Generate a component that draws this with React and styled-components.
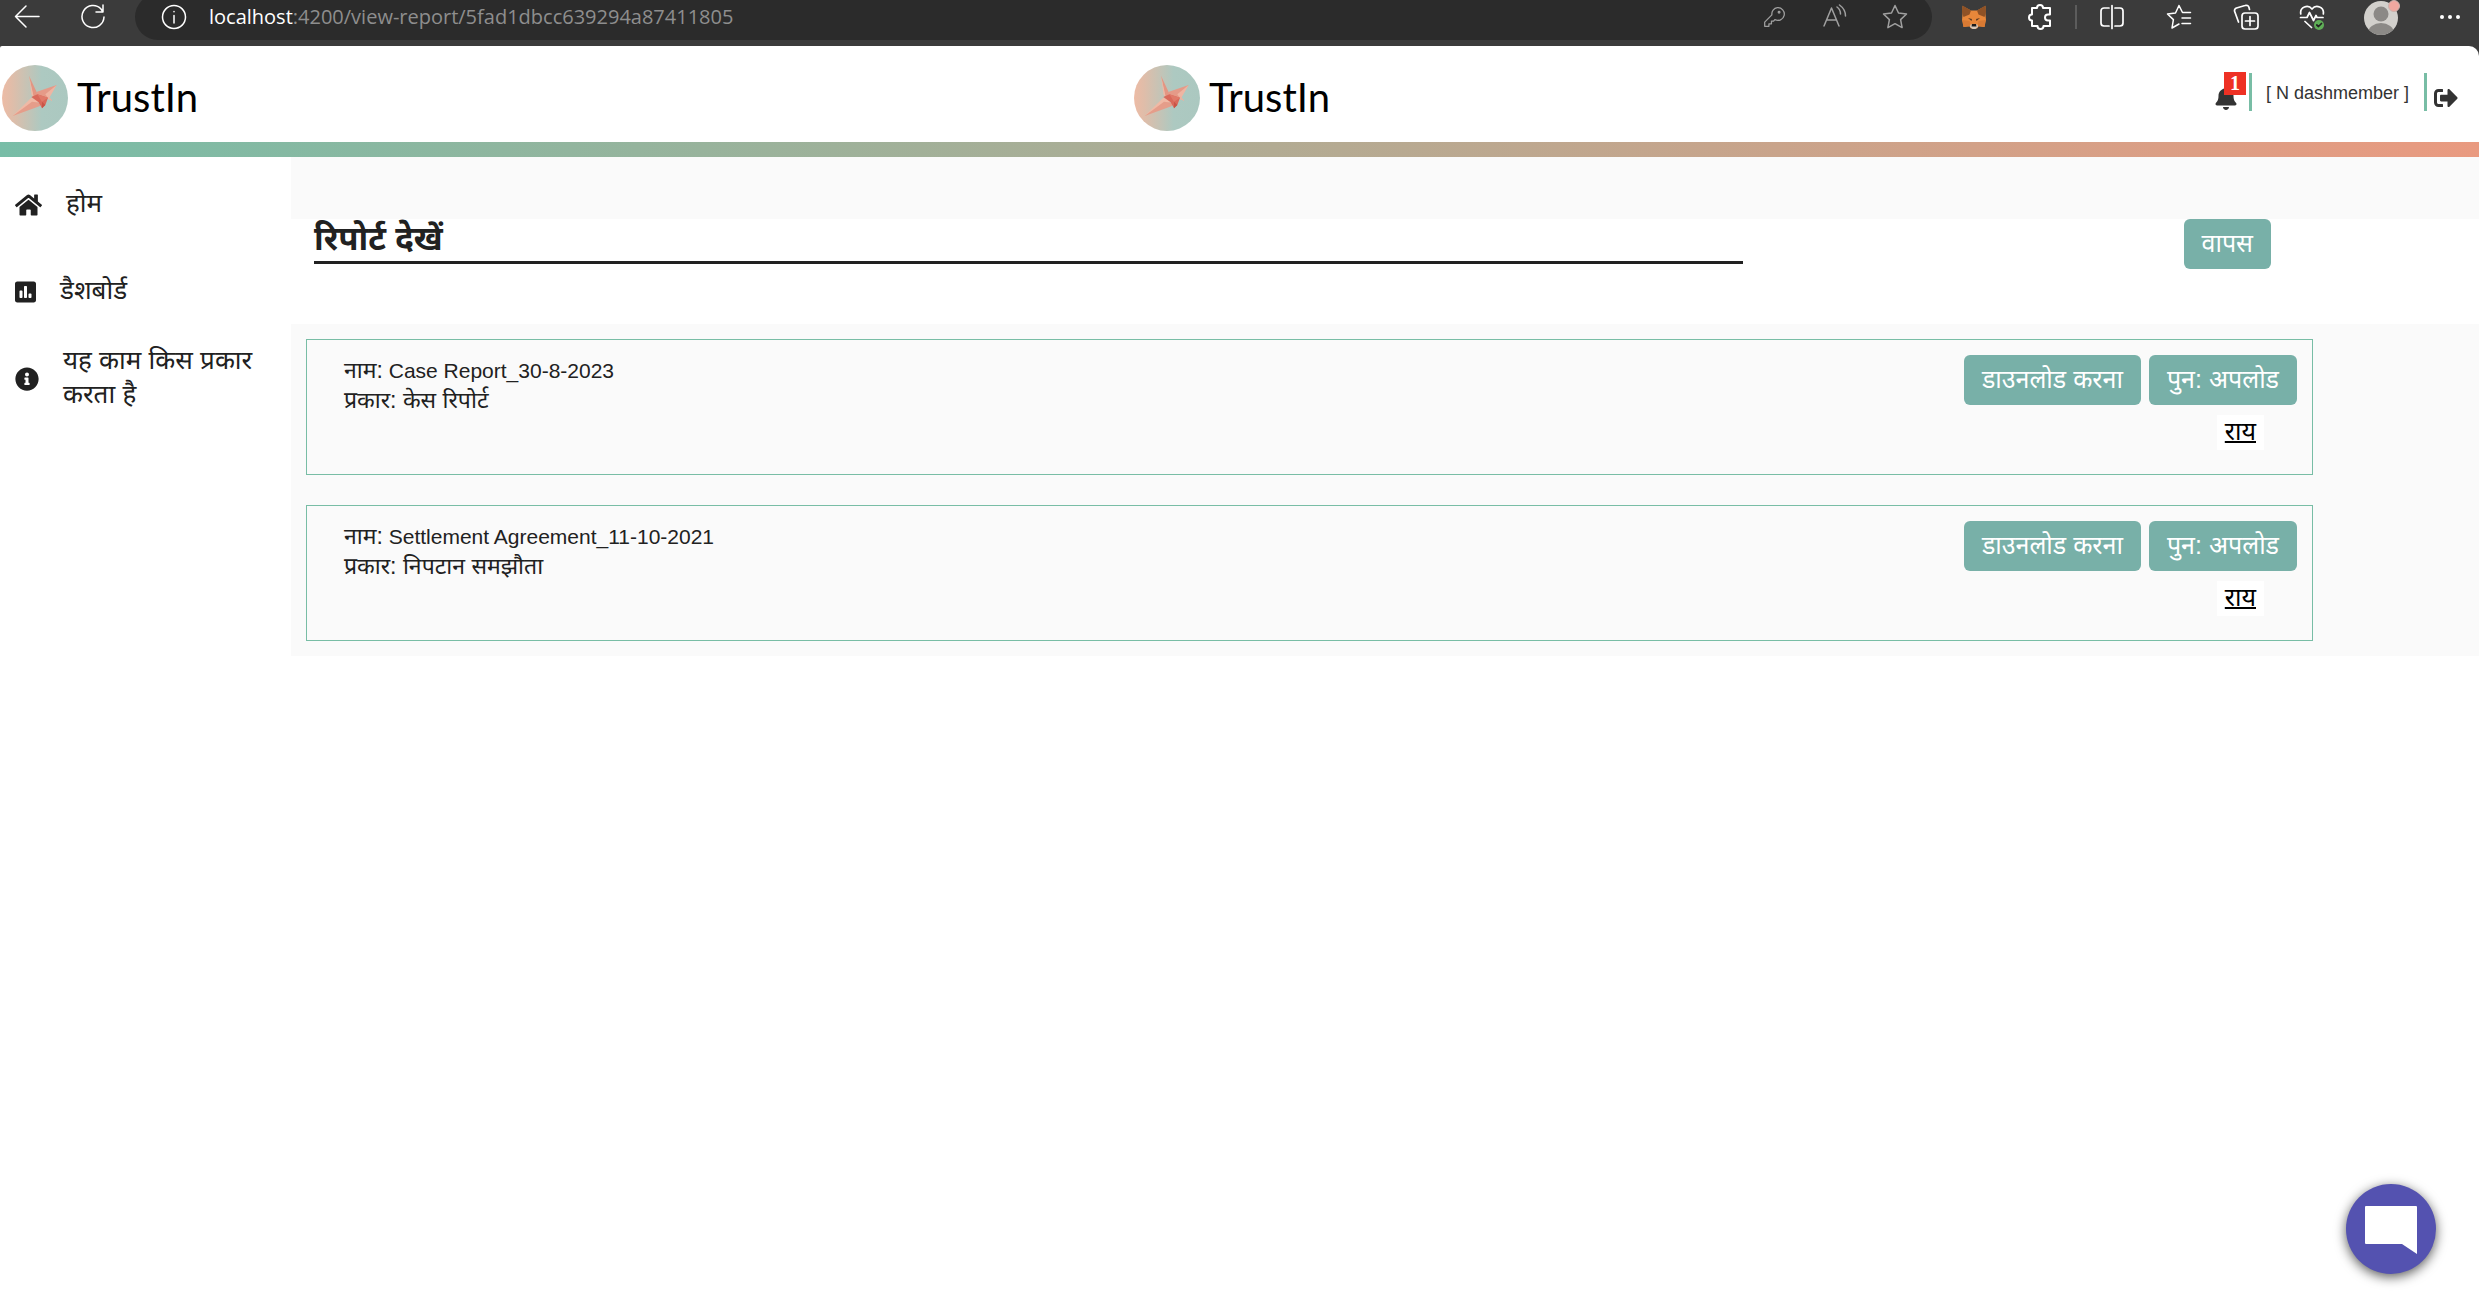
import React from "react";
import styled, { createGlobalStyle } from "styled-components";
import { FaHome, FaPoll, FaInfoCircle, FaBell, FaSignOutAlt } from "react-icons/fa";

const GlobalStyle = createGlobalStyle`
  * { box-sizing: border-box; }
  body {
    margin: 0;
    background: #fff;
    color: #212121;
    font-family: "Liberation Sans", "Noto Sans", "Noto Sans Devanagari", sans-serif;
  }
`;

/* ---------- browser bar ---------- */

const BrowserBar = styled.div`
  display: flex;
  align-items: center;
  height: 46px;
  padding: 0 16px 12px 14px;
  background: #3b3b3b;
  overflow: hidden;
`;

const BarButton = styled.button`
  display: grid;
  place-items: center;
  flex: none;
  width: ${(p) => p.$size || 26}px;
  height: ${(p) => p.$size || 26}px;
  margin: 0 ${(p) => p.$after || 0}px 0 0;
  padding: 0;
  border: 0;
  background: none;
  color: ${(p) => (p.$dim ? "#a0a0a0" : "#fff")};
`;

const AddressBar = styled.div`
  display: flex;
  align-items: center;
  flex: 1;
  height: 46px;
  margin-right: 29px;
  padding: 0 24px 0 26px;
  border-radius: 23px;
  background: #2b2b2b;
`;

const Url = styled.div`
  flex: 1;
  color: #8e8e8e;
  font: 20px/28px "Open Sans", "Noto Sans", sans-serif;
  white-space: nowrap;
`;

const Host = styled.span`
  color: #fff;
`;

const BarDivider = styled.span`
  flex: none;
  width: 2px;
  height: 24px;
  margin-right: 22px;
  background: #5c5c5c;
`;

const Glyph = ({ children, size = 26, width = 1.5 }) => (
  <svg
    width={size}
    height={size}
    viewBox="0 0 26 26"
    fill="none"
    stroke="currentColor"
    strokeWidth={width}
    strokeLinecap="round"
    strokeLinejoin="round"
    aria-hidden="true"
  >
    {children}
  </svg>
);

const Fox = () => (
  <svg width="26" height="26" viewBox="0 0 26 26" aria-hidden="true">
    <path d="M1.500 2 10 6.500h6L24.500 2v8l.5 6-1.500 7-6-.5-1.500 2h-6l-1.500-2-6 .5L1 16l.5-6z" fill="#e8873a" />
    <path d="M1.500 1.500 10 6.500l-1.500 4L2.500 13 1 8z" fill="#8f5226" />
    <path d="M24.500 1.500 16 6.500l1.500 4 6 2.500L25 8z" fill="#8f5226" />
    <path d="m7 14 4 1-.5 2zM19 14l-4 1 .5 2z" fill="#5a3a24" />
    <path d="m1.500 16 7 1 1 4.500-7 1.500zM24.500 16l-7 1-1 4.500 7 1.500z" fill="#d97a33" />
    <path d="M9.500 20.500h7l.5 2.500-2.500 2h-3L9 23z" fill="#d8c8ba" />
    <path d="M11 20h4l.5 2.500h-5z" fill="#1c1c1c" />
  </svg>
);

const Avatar = () => (
  <svg width="36" height="36" viewBox="0 0 36 36" aria-hidden="true">
    <defs>
      <clipPath id="face">
        <circle cx="17" cy="19" r="17" />
      </clipPath>
    </defs>
    <circle cx="17" cy="19" r="17" fill="#d2d0cc" />
    <g clipPath="url(#face)" fill="#8b8986">
      <circle cx="17" cy="15" r="7.500" />
      <ellipse cx="17" cy="34" rx="13" ry="10" />
    </g>
    <circle cx="30" cy="7" r="5.500" fill="#f0a8a0" stroke="#c9b3ae" />
  </svg>
);

/* ---------- header ---------- */

const Frame = styled.div`
  background: #3b3b3b;
`;

const Header = styled.header`
  display: grid;
  grid-template-columns: 1fr auto 1fr;
  align-items: center;
  height: 96px;
  padding-top: 8px;
  border-radius: 2px 10px 0 0;
  background: #fff;
`;

const Brand = styled.a`
  display: flex;
  align-items: center;
  gap: 9px;
  width: 215px;
  padding-left: 2px;
  color: #000;
  font: 400 40px/66px Lato, sans-serif;
  text-decoration: none;
`;

const BrandName = styled.span`
  padding-bottom: 2px;
  line-height: 64px;
`;

const Tools = styled.div`
  display: flex;
  align-items: flex-end;
  align-self: start;
  justify-self: end;
  padding: 19px 21px 0 0;
`;

const Member = styled.div`
  margin: 0 7px 0 11px;
  padding: 2px 15px 0 14px;
  border: solid #78bda5;
  border-width: 0 3px;
  font-size: 18px;
  line-height: 36px;
  color: #333;
`;

const IconButton = styled.button`
  position: relative;
  display: grid;
  padding: 0 0 1px;
  border: 0;
  background: none;
  color: #333;
  font-size: 24px;
`;

const Count = styled.span`
  position: absolute;
  left: 10px;
  bottom: 16px;
  width: 22px;
  background: #ee3124;
  color: #fff;
  font: bold 20px/23px "Liberation Serif", serif;
  text-align: center;
`;

const Ribbon = styled.div`
  height: 15px;
  background: linear-gradient(90deg, #78bda7, #e99a80);
`;

const Crane = () => (
  <svg width="66" height="66" viewBox="102 72 198 198" aria-hidden="true">
    <defs>
      <linearGradient id="disc">
        <stop offset="0" stopColor="#edbba5" />
        <stop offset=".15" stopColor="#e0bda9" />
        <stop offset=".6" stopColor="#adc9c1" />
        <stop offset="1" stopColor="#abc8c0" />
      </linearGradient>
    </defs>
    <circle cx="201" cy="171" r="99" fill="url(#disc)" />
    <path d="M183 104 209 160 196 168z" fill="#e39683" />
    <path d="M183 104 191 162 197 167z" fill="#f0b8a4" />
    <path d="M266 132 207 152 204 162 238 172z" fill="#e59a88" />
    <path d="M266 132 232 160 242 174z" fill="#efb5a2" />
    <path d="M240 164 254 180 238 174z" fill="#eeb19e" />
    <path d="M134 225 190 170 216 180z" fill="#f0b9a5" />
    <path d="M134 225 192 182 224 186 214 196z" fill="#e59d8a" />
    <path d="M190 168 208 160 240 170 232 192 222 202 212 184z" fill="#d9695a" />
    <path d="M208 160 240 170 222 182z" fill="#e07a69" />
    <path d="M222 182 232 192 222 202z" fill="#c85447" />
  </svg>
);

/* ---------- body ---------- */

const Body = styled.div`
  display: flex;
  align-items: flex-start;
`;

const SideNav = styled.nav`
  flex: none;
  width: 291px;
  padding: 4px 32px 0 15px;
`;

const NavLink = styled.a`
  display: flex;
  align-items: center;
  gap: 24px;
  min-height: 87px;
  color: #212121;
  font-size: 26px;
  line-height: 34px;
  text-decoration: none;

  svg {
    flex: none;
    width: ${(p) => p.$icon}px;
    height: 24px;
  }
`;

const NavLabel = styled.span`
  padding-bottom: 3px;
`;

const Main = styled.main`
  flex: 1;
  min-width: 0;
  padding-top: 62px;
  background: #fafafa;
`;

const TitleBand = styled.div`
  display: flex;
  align-items: flex-start;
  justify-content: space-between;
  height: 105px;
  padding: 0 208px 0 23px;
  background: #fff;
`;

const Title = styled.h1`
  flex: none;
  width: 73%;
  margin: 0;
  padding-bottom: 3px;
  border-bottom: 3px solid #212121;
  font-size: 33px;
  font-weight: 700;
  line-height: 39px;
`;

const ActionButton = styled.button`
  height: 50px;
  padding: 0 18px 3px;
  border: 0;
  border-radius: 6px;
  background: #78b0a8;
  color: #fff;
  font-family: inherit;
  font-size: 25px;
  line-height: 34px;
  white-space: nowrap;
`;

const Reports = styled.section`
  display: grid;
  gap: 30px;
  padding: 15px 166px 15px 15px;
`;

const Card = styled.article`
  display: flex;
  justify-content: space-between;
  min-height: 136px;
  padding: 15px 15px 15px 37px;
  border: 1px solid #78bda5;
`;

const Details = styled.div`
  font-size: 21px;
  line-height: 30px;
`;

const DetailLine = styled.div`
  height: 30px;
`;

const Hindi = styled.span`
  font-size: 23px;
`;

const Actions = styled.div`
  display: flex;
  flex-wrap: wrap;
  align-content: flex-start;
  justify-content: flex-end;
  gap: 10px 8px;
  width: 360px;
`;

const Feedback = styled.button`
  height: 35px;
  margin-right: 33px;
  padding: 0 8px 3px;
  border: 0;
  background: #fff;
  color: #000;
  font-family: inherit;
  font-size: 25px;
  line-height: 32px;
  text-decoration: underline 2px;
`;

const ChatButton = styled.button`
  position: fixed;
  right: 43px;
  bottom: 22px;
  display: grid;
  place-items: center;
  width: 90px;
  height: 90px;
  padding: 2px 0 0;
  border: 0;
  border-radius: 50%;
  background: #5452b0;
  box-shadow: 0 3px 12px rgba(0, 0, 0, 0.65);
`;

const reports = [
  { name: "Case Report_30-8-2023", type: "केस रिपोर्ट" },
  { name: "Settlement Agreement_11-10-2021", type: "निपटान समझौता" },
];

export default function App() {
  return (
    <>
      <GlobalStyle />
      <BrowserBar>
        <BarButton aria-label="Back" $after={40}>
          <Glyph><path d="M25 12.500H1.500M12 2 1.500 12.500 12 23" /></Glyph>
        </BarButton>
        <BarButton aria-label="Reload" $after={29}>
          <Glyph><path d="M24 13a11 11 0 1 1-3-8l2 3M23 1v7h-7" /></Glyph>
        </BarButton>
        <AddressBar>
          <BarButton aria-label="Site information" $after={22}>
            <Glyph><circle cx="13" cy="13" r="11.500" /><path d="M13 11.500V19M13 7.500v.3" /></Glyph>
          </BarButton>
          <Url><Host>localhost</Host>:4200/view-report/5fad1dbcc639294a87411805</Url>
          <BarButton aria-label="Passwords" $dim $after={35}>
            <Glyph size={22}>
              <path d="M17 2a7.500 7.500 0 1 1-3 14l-1.500 2H10v3H7v3H2v-5l8.500-8.500A7.500 7.500 0 0 1 17 2z" />
              <circle cx="19" cy="7.500" r="1" />
            </Glyph>
          </BarButton>
          <BarButton aria-label="Read aloud" $dim $after={34}>
            <Glyph><path d="M2 22 9.500 4 17 22M5 16h9.500M15 3c2 1.500 3.500 4 3.500 7M17.500 1c3.500 2.500 6 6.500 6 11" /></Glyph>
          </BarButton>
          <BarButton aria-label="Add to favourites" $dim>
            <Glyph><path d="m13 1.500 3.500 7.500 8 1-5.900 5.600 1.500 8L13 19.700l-7.100 3.900 1.500-8L1.500 10l8-1z" /></Glyph>
          </BarButton>
        </AddressBar>
        <BarButton aria-label="Wallet" $after={40}><Fox /></BarButton>
        <BarButton aria-label="Extensions" $after={22}>
          <Glyph width={2}>
            <path d="M5 4h5a3 3 0 0 1 6 0h7v6.500h-2a3 3 0 0 0 0 6h2V22h-6.500a3 3 0 0 1-6 0H5v-5.500a3 3 0 0 1 0-6z" />
          </Glyph>
        </BarButton>
        <BarDivider />
        <BarButton aria-label="Split screen" $after={41}>
          <Glyph width={1.700}><path d="M10 4H5a3 3 0 0 0-3 3v12a3 3 0 0 0 3 3h5M16 4h5a3 3 0 0 1 3 3v12a3 3 0 0 1-3 3h-5M13 1.500v23" /></Glyph>
        </BarButton>
        <BarButton aria-label="Favourites" $after={41}>
          <Glyph><path d="M24.500 8.500h-8L13 1.500 9.500 9l-8 1 5.900 5.600L6 24l7-4M16 14h8.500M16 19.500h8.500" /></Glyph>
        </BarButton>
        <BarButton aria-label="Collections" $after={40}>
          <Glyph width={1.700}>
            <rect x="9" y="9" width="16" height="16" rx="3" />
            <path d="M17 12.500v9M12.500 17h9M5.500 18 1.500 7a3 3 0 0 1 2-3L12 1.500a3 3 0 0 1 4 2l.5 2" />
          </Glyph>
        </BarButton>
        <BarButton aria-label="Browser essentials" $after={39}>
          <Glyph width={1.700}>
            <path d="M1.800 10C.5 3 9 0 13 5c4-5 12.500-2 11.300 5M1.500 13.500H8l2.500-5 4 8 2.500-5 1 2h6M6 17.500l6.500 6" />
            <circle cx="20" cy="21" r="5" fill="#5fae57" stroke="none" />
            <path d="m17.800 21 1.700 1.500 3-3" stroke="#222" />
          </Glyph>
        </BarButton>
        <BarButton aria-label="Profile" $size={36} $after={37}><Avatar /></BarButton>
        <BarButton aria-label="More">
          <Glyph><g fill="currentColor" stroke="none"><circle cx="5" cy="13" r="2" /><circle cx="13" cy="13" r="2" /><circle cx="21" cy="13" r="2" /></g></Glyph>
        </BarButton>
      </BrowserBar>

      <Frame>
        <Header>
          <Brand href="#"><Crane /><BrandName>TrustIn</BrandName></Brand>
          <Brand href="#"><Crane /><BrandName>TrustIn</BrandName></Brand>
          <Tools>
            <IconButton aria-label="Notifications">
              <FaBell />
              <Count>1</Count>
            </IconButton>
            <Member>[ N dashmember ]</Member>
            <IconButton aria-label="Log out"><FaSignOutAlt /></IconButton>
          </Tools>
        </Header>
      </Frame>
      <Ribbon />

      <Body>
        <SideNav>
          <NavLink href="#" $icon={27}><FaHome /><NavLabel>होम</NavLabel></NavLink>
          <NavLink href="#" $icon={21}><FaPoll /><NavLabel>डैशबोर्ड</NavLabel></NavLink>
          <NavLink href="#" $icon={24}><FaInfoCircle /><NavLabel>यह काम किस प्रकार करता है</NavLabel></NavLink>
        </SideNav>
        <Main>
          <TitleBand>
            <Title>रिपोर्ट देखें</Title>
            <ActionButton>वापस</ActionButton>
          </TitleBand>
          <Reports>
            {reports.map((r) => (
              <Card key={r.name}>
                <Details>
                  <DetailLine><Hindi>नाम:</Hindi> {r.name}</DetailLine>
                  <DetailLine><Hindi>प्रकार: {r.type}</Hindi></DetailLine>
                </Details>
                <Actions>
                  <ActionButton>डाउनलोड करना</ActionButton>
                  <ActionButton>पुन: अपलोड</ActionButton>
                  <Feedback>राय</Feedback>
                </Actions>
              </Card>
            ))}
          </Reports>
        </Main>
      </Body>

      <ChatButton aria-label="Open chat">
        <svg width="54" height="50" viewBox="0 0 54 50" aria-hidden="true">
          <path d="M2 1h50a1 1 0 0 1 1 1v47L38 39H2a1 1 0 0 1-1-1V2a1 1 0 0 1 1-1z" fill="#fff" />
        </svg>
      </ChatButton>
    </>
  );
}
